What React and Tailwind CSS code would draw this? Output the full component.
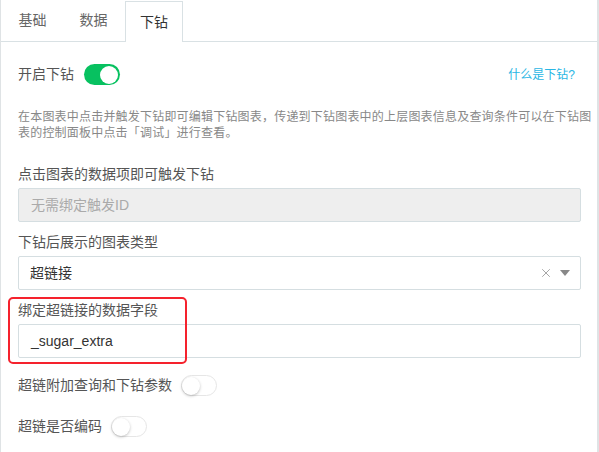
import { X } from 'lucide-react';

function Toggle({ on }) {
    return (
        <div
            className={`relative w-[36px] h-[21px] rounded-full shrink-0 ${on ? 'bg-[#07c160]' : 'bg-white border border-[#e6e6e6]'}`}
        >
            <div
                className={`absolute top-1/2 -translate-y-1/2 w-[18px] h-[18px] rounded-full bg-white ${on ? 'right-[2px]' : 'left-[0px] shadow-[0_1px_3px_rgba(0,0,0,0.25)]'}`}
            />
        </div>
    );
}

export default function App() {
    const tabs = ['基础', '数据', '下钻'];

    return (
        <div
            className="w-[599px] h-[452px] bg-white overflow-hidden text-[#555] relative"
            style={{ fontFamily: '"Liberation Sans", "Noto Sans CJK SC", sans-serif' }}
        >
            <div className="h-full border-l border-r-2 border-[#dfe3e5]">
                {/* Tabs */}
                <div className="flex items-end h-[42px] border-b border-[#d9e1e4] pl-[1px]">
                    {tabs.map((t, i) => (
                        <div
                            key={t}
                            className={
                                i === 2
                                    ? 'h-[41px] w-[58px] ml-[1px] -mb-[1px] bg-white border-t border-x border-[#d9e1e4] flex items-center justify-center text-[14px] text-[#333]'
                                    : 'h-[41px] w-[61px] flex items-center justify-center text-[14px] text-[#666]'
                            }
                        >
                            {t}
                        </div>
                    ))}
                </div>

                <div className="pl-[17px] pr-[16px]">
                    {/* Enable drill */}
                    <div className="flex items-center justify-between mt-[22px] h-[21px]">
                        <div className="flex items-center gap-[10px]">
                            <span className="text-[14px] text-[#555]">开启下钻</span>
                            <Toggle on />
                        </div>
                        <span className="text-[12px] text-[#29b6e4] mr-[6px]">什么是下钻?</span>
                    </div>

                    <p className="mt-[24px] text-[12px] leading-[16px] text-[#888] whitespace-nowrap tracking-[0.2px]">
                        在本图表中点击并触发下钻即可编辑下钻图表，传递到下钻图表中的上层图表信息及查询条件可以在下钻图
                        <br />
                        表的控制面板中点击「调试」进行查看。
                    </p>

                    {/* Trigger id */}
                    <div className="mt-[23px] text-[14px] leading-[20px]">点击图表的数据项即可触发下钻</div>
                    <div className="mt-[4px] h-[34px] bg-[#eeeeee] border border-[#d5dee1] rounded-[2px] flex items-center px-[12px] text-[14px] text-[#aaa]">
                        无需绑定触发ID
                    </div>

                    {/* Chart type */}
                    <div className="mt-[10px] text-[14px] leading-[20px]">下钻后展示的图表类型</div>
                    <div className="mt-[4px] h-[34px] bg-white border border-[#d5dee1] rounded-[2px] flex items-center justify-between pl-[11px] pr-[10px] text-[14px] text-[#333]">
                        <span>超链接</span>
                        <div className="flex items-center gap-[7px] text-[#999]">
                            <X size={14} strokeWidth={1.5} />
                            <svg width="10" height="6" viewBox="0 0 10 6">
                                <path d="M0 0h10L5 6z" fill="#888" />
                            </svg>
                        </div>
                    </div>

                    {/* Link field */}
                    <div className="mt-[10px] text-[14px] leading-[20px]">绑定超链接的数据字段</div>
                    <div className="mt-[4px] h-[34px] bg-white border border-[#d5dee1] rounded-[2px] flex items-center px-[12px] text-[14px] text-[#333]">
                        _sugar_extra
                    </div>

                    {/* Switch rows */}
                    <div className="mt-[17px] flex items-center gap-[9px] h-[21px]">
                        <span className="text-[14px]">超链附加查询和下钻参数</span>
                        <Toggle />
                    </div>
                    <div className="mt-[20px] flex items-center gap-[9px] h-[21px]">
                        <span className="text-[14px]">超链是否编码</span>
                        <Toggle />
                    </div>
                </div>
            </div>

            {/* red annotation box */}
            <div className="absolute left-[8px] top-[297px] w-[179px] h-[67px] border-2 border-[#f5222d] rounded-[5px] pointer-events-none" />
        </div>
    );
}
